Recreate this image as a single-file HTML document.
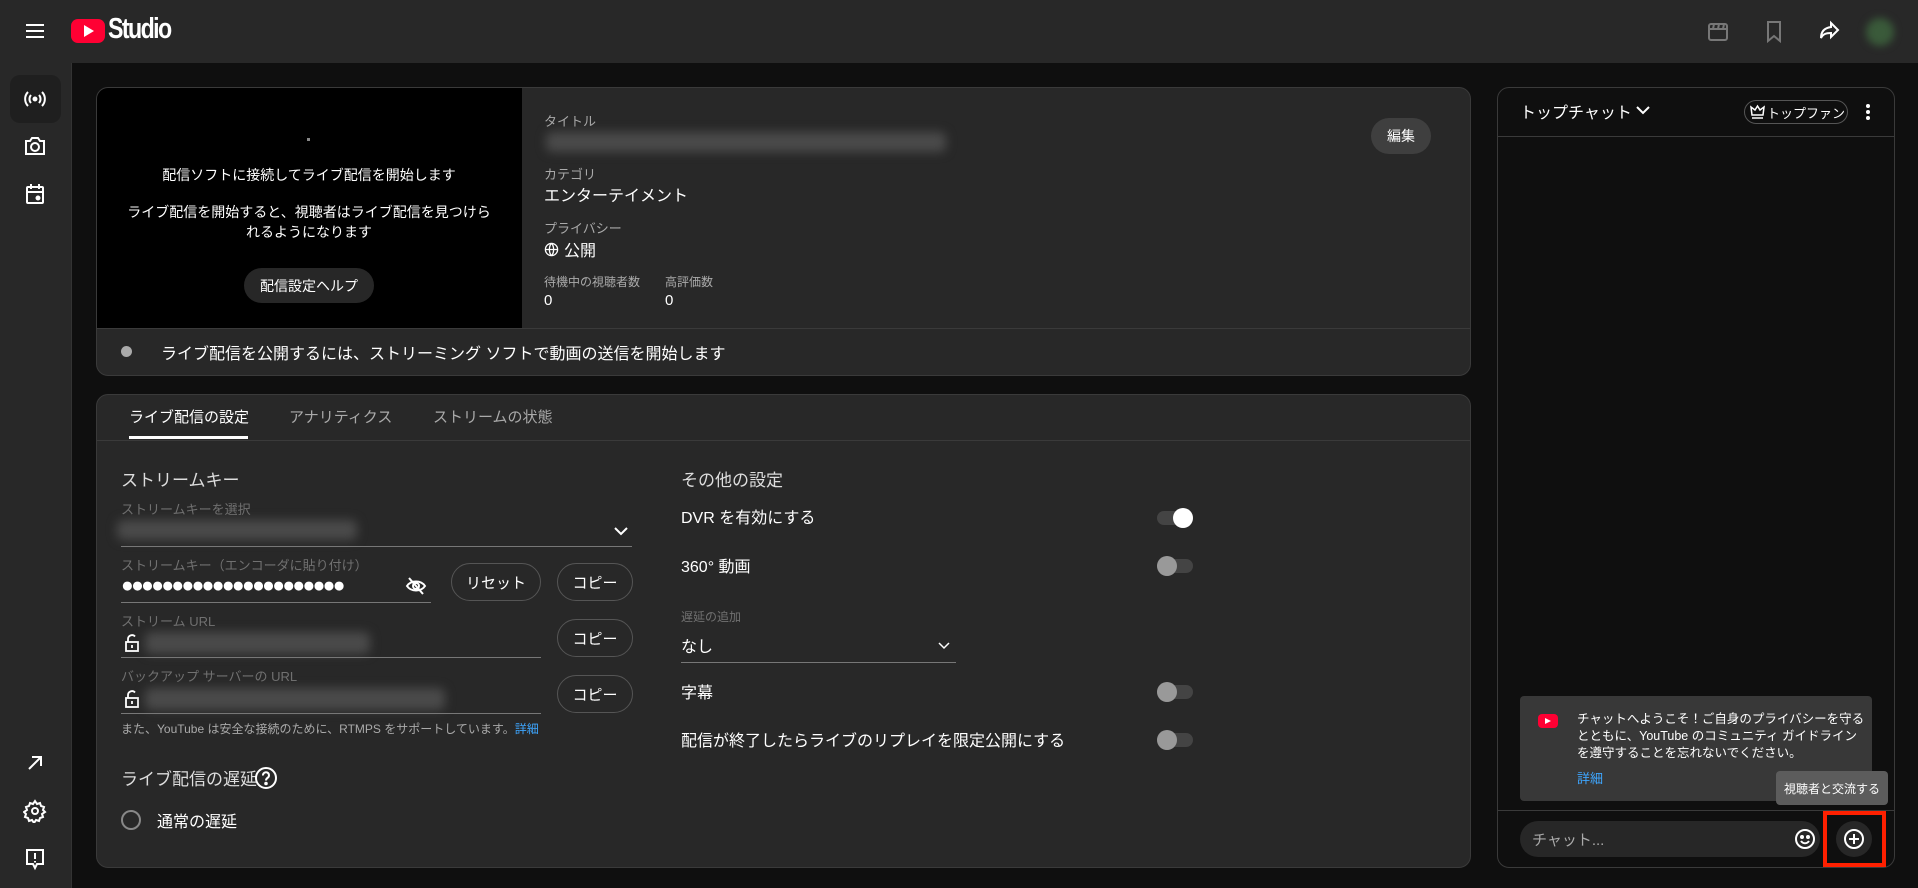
<!DOCTYPE html>
<html><head><meta charset="utf-8"><style>
*{box-sizing:border-box;margin:0;padding:0}
body{width:1918px;height:888px;overflow:hidden;background:#0f0f0f;font-family:"Liberation Sans","Noto Sans CJK JP",sans-serif;color:#fff;position:relative}
.a{position:absolute;white-space:nowrap}
.lbl{font-size:13px;color:#aaa}
.lbl2{font-size:13px;color:#717171}
.btn{position:absolute;border:1px solid #555;border-radius:20px;font-size:15px;display:flex;align-items:center;justify-content:center;color:#fff}
.line{position:absolute;height:1px;background:#777}
.blur{position:absolute;background:#4a4a4a;filter:blur(5px);border-radius:6px}
.tg{position:absolute;width:36px;height:14px;border-radius:7px;background:#444}
.tg i{position:absolute;top:-3px;width:20px;height:20px;border-radius:50%;background:#999}
svg{position:absolute}
</style></head><body>
<!-- top bar -->
<div class="a" style="left:0;top:0;width:1918px;height:63px;background:#282828"></div>
<svg style="left:23px;top:19px" width="24" height="24" viewBox="0 0 24 24"><path d="M3 6h18M3 12h18M3 18h18" stroke="#fff" stroke-width="2"/></svg>
<div class="a" style="left:71px;top:19px;width:34px;height:24px;background:#ff0033;border-radius:7px"></div>
<svg style="left:83px;top:25px" width="12" height="12" viewBox="0 0 12 12"><path d="M1 0L11 6L1 12Z" fill="#fff"/></svg>
<div class="a" style="left:108px;top:13px;font-size:29px;font-weight:bold;letter-spacing:-2px;transform:scaleX(0.8);transform-origin:left">Studio</div>
<svg style="left:1706px;top:20px" width="24" height="24" viewBox="0 0 24 24" fill="none" stroke="#777" stroke-width="2"><rect x="3" y="4" width="18" height="16" rx="2"/><path d="M3 9h18M8 4l-1 5M13 4l-1 5M18 4l-1 5"/></svg>
<svg style="left:1762px;top:19px" width="24" height="24" viewBox="0 0 24 24" fill="none" stroke="#777" stroke-width="2"><path d="M6 3h12v19l-6-5-6 5z"/></svg>
<svg style="left:1817px;top:19px" width="24" height="24" viewBox="0 0 24 24" fill="none" stroke="#fff" stroke-width="2"><path d="M14 4l7 7-7 7v-4c-5 0-8 1-10 5 0-6 3-10 10-11z"/></svg>
<div class="a" style="left:1866px;top:18px;width:28px;height:28px;border-radius:50%;background:#3a5a3a;filter:blur(4px)"></div>
<!-- sidebar -->
<div class="a" style="left:0;top:63px;width:72px;height:825px;background:#282828;border-right:1px solid #333"></div>
<div class="a" style="left:10px;top:75px;width:51px;height:48px;background:#1f1f1f;border-radius:10px"></div>
<svg style="left:23px;top:87px" width="24" height="24" viewBox="0 0 24 24" fill="none" stroke="#fff" stroke-width="2"><circle cx="12" cy="12" r="1.5" fill="#fff"/><path d="M8 8a6 6 0 000 8M16 8a6 6 0 010 8M5 5a10 10 0 000 14M19 5a10 10 0 010 14"/></svg>
<svg style="left:23px;top:134px" width="24" height="24" viewBox="0 0 24 24" fill="none" stroke="#fff" stroke-width="2"><path d="M3 7h4l2-3h6l2 3h4v13H3z"/><circle cx="12" cy="13" r="4"/></svg>
<svg style="left:23px;top:182px" width="24" height="24" viewBox="0 0 24 24" fill="none" stroke="#fff" stroke-width="2"><rect x="4" y="5" width="16" height="16" rx="1"/><path d="M4 10h16M8 2v5M16 2v5"/><circle cx="15" cy="16" r="1.5" fill="#fff"/></svg>
<svg style="left:23px;top:751px" width="24" height="24" viewBox="0 0 24 24" fill="none" stroke="#fff" stroke-width="2"><path d="M6 18L18 6M9 6h9v9"/></svg>
<svg style="left:23px;top:799px" width="24" height="24" viewBox="0 0 24 24" fill="none" stroke="#fff" stroke-width="2"><circle cx="12" cy="12" r="3"/><path d="M12 2l2 3 3-1 1 3 3 1-1 3 2 2-3 2 1 3-3 1-1 3-3-1-2 3-2-3-3 1-1-3-3-1 1-3-2-2 3-2-1-3 3-1 1-3 3 1z"/></svg>
<svg style="left:23px;top:847px" width="24" height="24" viewBox="0 0 24 24" fill="none" stroke="#fff" stroke-width="2"><path d="M4 3h16v14h-6l-2 4-2-4H4z"/><path d="M12 6v6M12 14v1.5"/></svg>
<!-- card 1 -->
<div class="a" style="left:96px;top:87px;width:1375px;height:289px;background:#282828;border:1px solid #3a3a3a;border-radius:12px;overflow:hidden">
 <div class="a" style="left:0;top:0;width:425px;height:240px;background:#000"></div>
 <div class="a" style="left:0;top:240px;width:1375px;height:1px;background:#3a3a3a"></div>
</div>
<div class="a" style="left:307px;top:138px;width:3px;height:3px;background:#888"></div>
<div class="a" style="left:97px;top:165px;width:424px;text-align:center;font-size:14px">配信ソフトに接続してライブ配信を開始します</div>
<div class="a" style="left:97px;top:202px;width:424px;text-align:center;font-size:14px;line-height:20px;white-space:normal;padding:0 27px">ライブ配信を開始すると、視聴者はライブ配信を見つけられるようになります</div>
<div class="a" style="left:244px;top:268px;width:130px;height:35px;background:#272727;border-radius:18px;font-size:14px;display:flex;align-items:center;justify-content:center">配信設定ヘルプ</div>
<div class="a lbl" style="left:544px;top:111px">タイトル</div>
<div class="blur" style="left:546px;top:132px;width:400px;height:20px"></div>
<div class="a lbl" style="left:544px;top:164px">カテゴリ</div>
<div class="a" style="left:544px;top:182px;font-size:16px">エンターテイメント</div>
<div class="a lbl" style="left:544px;top:218px">プライバシー</div>
<svg style="left:544px;top:242px" width="15" height="15" viewBox="0 0 16 16" fill="none" stroke="#fff" stroke-width="1.4"><circle cx="8" cy="8" r="6.5"/><path d="M1.5 8h13M8 1.5c-3 3-3 10 0 13M8 1.5c3 3 3 10 0 13"/></svg>
<div class="a" style="left:564px;top:237px;font-size:16px">公開</div>
<div class="a lbl" style="left:544px;top:273px;font-size:12px">待機中の視聴者数</div>
<div class="a" style="left:544px;top:292px;font-size:15px">0</div>
<div class="a lbl" style="left:665px;top:273px;font-size:12px">高評価数</div>
<div class="a" style="left:665px;top:292px;font-size:15px">0</div>
<div class="a" style="left:1371px;top:118px;width:60px;height:36px;background:#3f3f3f;border-radius:18px;font-size:14px;display:flex;align-items:center;justify-content:center">編集</div>
<div class="a" style="left:121px;top:346px;width:11px;height:11px;border-radius:50%;background:#aaa"></div>
<div class="a" style="left:161px;top:340px;font-size:16px">ライブ配信を公開するには、ストリーミング ソフトで動画の送信を開始します</div>
<!-- card 2 -->
<div class="a" style="left:96px;top:394px;width:1375px;height:474px;background:#282828;border:1px solid #3a3a3a;border-radius:12px"></div>
<div class="a" style="left:97px;top:440px;width:1373px;height:1px;background:#3a3a3a"></div>
<div class="a" style="left:129px;top:406px;font-size:15px">ライブ配信の設定</div>
<div class="a" style="left:129px;top:436px;width:119px;height:3px;background:#fff"></div>
<div class="a" style="left:289px;top:406px;font-size:15px;color:#aaa">アナリティクス</div>
<div class="a" style="left:433px;top:406px;font-size:15px;color:#aaa">ストリームの状態</div>
<div class="a" style="left:121px;top:466px;font-size:17px;color:#ddd">ストリームキー</div>
<div class="a lbl2" style="left:121px;top:499px">ストリームキーを選択</div>
<div class="blur" style="left:117px;top:520px;width:240px;height:20px"></div>
<svg style="left:612px;top:524px" width="18" height="14" viewBox="0 0 18 14" fill="none" stroke="#fff" stroke-width="2"><path d="M3 4l6 6 6-6"/></svg>
<div class="line" style="left:121px;top:546px;width:511px"></div>
<div class="a lbl2" style="left:121px;top:555px">ストリームキー（エンコーダに貼り付け）</div>
<div class="a" style="left:121px;top:573px;font-size:21px;letter-spacing:-2.6px;width:280px;overflow:hidden;line-height:26px">●●●●●●●●●●●●●●●●●●●●●●</div>
<svg style="left:405px;top:576px" width="22" height="20" viewBox="0 0 22 20" fill="none" stroke="#fff" stroke-width="2"><path d="M2 10c4-6 14-6 18 0-4 6-14 6-18 0z"/><circle cx="11" cy="10" r="3"/><path d="M4 2l14 16"/></svg>
<div class="line" style="left:121px;top:602px;width:310px"></div>
<div class="btn" style="left:451px;top:563px;width:90px;height:38px">リセット</div>
<div class="btn" style="left:557px;top:563px;width:76px;height:38px">コピー</div>
<div class="a lbl2" style="left:121px;top:611px">ストリーム URL</div>
<svg style="left:124px;top:634px" width="16" height="18" viewBox="0 0 16 18" fill="none" stroke="#fff" stroke-width="1.8"><rect x="2" y="8" width="12" height="9"/><path d="M4 8V5a4 4 0 017-2.5"/><path d="M8 11v3"/></svg>
<div class="blur" style="left:145px;top:632px;width:225px;height:22px"></div>
<div class="line" style="left:121px;top:657px;width:420px"></div>
<div class="btn" style="left:557px;top:619px;width:76px;height:38px">コピー</div>
<div class="a lbl2" style="left:121px;top:666px">バックアップ サーバーの URL</div>
<svg style="left:124px;top:690px" width="16" height="18" viewBox="0 0 16 18" fill="none" stroke="#fff" stroke-width="1.8"><rect x="2" y="8" width="12" height="9"/><path d="M4 8V5a4 4 0 017-2.5"/><path d="M8 11v3"/></svg>
<div class="blur" style="left:145px;top:688px;width:300px;height:22px"></div>
<div class="line" style="left:121px;top:713px;width:420px"></div>
<div class="btn" style="left:557px;top:675px;width:76px;height:38px">コピー</div>
<div class="a" style="left:121px;top:720px;font-size:12px;color:#aaa">また、YouTube は安全な接続のために、RTMPS をサポートしています。<span style="color:#3ea6ff">詳細</span></div>
<div class="a" style="left:121px;top:765px;font-size:17px;color:#ddd">ライブ配信の遅延</div>
<svg style="left:254px;top:766px" width="24" height="24" viewBox="0 0 24 24" fill="none" stroke="#fff" stroke-width="2"><circle cx="12" cy="12" r="10"/><path d="M9 9.5a3 3 0 115 2c-1.5 1-2 1.5-2 3"/><circle cx="12" cy="17.5" r="0.8" fill="#fff"/></svg>
<div class="a" style="left:121px;top:810px;width:20px;height:20px;border-radius:50%;border:2px solid #888"></div>
<div class="a" style="left:157px;top:808px;font-size:16px">通常の遅延</div>
<!-- right column of settings -->
<div class="a" style="left:681px;top:466px;font-size:17px;color:#ddd">その他の設定</div>
<div class="a" style="left:681px;top:504px;font-size:16px">DVR を有効にする</div>
<div class="tg" style="left:1157px;top:511px"><i style="left:16px;background:#fff"></i></div>
<div class="a" style="left:681px;top:553px;font-size:16px">360° 動画</div>
<div class="tg" style="left:1157px;top:559px"><i style="left:0"></i></div>
<div class="a lbl2" style="left:681px;top:608px;font-size:12px">遅延の追加</div>
<div class="a" style="left:681px;top:633px;font-size:16px">なし</div>
<svg style="left:936px;top:640px" width="16" height="12" viewBox="0 0 16 12" fill="none" stroke="#fff" stroke-width="1.5"><path d="M3 3l5 5 5-5"/></svg>
<div class="line" style="left:681px;top:662px;width:275px"></div>
<div class="a" style="left:681px;top:679px;font-size:16px">字幕</div>
<div class="tg" style="left:1157px;top:685px"><i style="left:0"></i></div>
<div class="a" style="left:681px;top:727px;font-size:16px">配信が終了したらライブのリプレイを限定公開にする</div>
<div class="tg" style="left:1157px;top:733px"><i style="left:0"></i></div>
<!-- chat panel -->
<div class="a" style="left:1497px;top:87px;width:398px;height:781px;background:#0f0f0f;border:1px solid #3a3a3a;border-radius:12px"></div>
<div class="a" style="left:1498px;top:136px;width:396px;height:1px;background:#3a3a3a"></div>
<div class="a" style="left:1520px;top:99px;font-size:16px">トップチャット</div>
<svg style="left:1635px;top:104px" width="16" height="14" viewBox="0 0 16 14" fill="none" stroke="#fff" stroke-width="2"><path d="M2 3l6 6 6-6"/></svg>
<div class="a" style="left:1744px;top:100px;width:104px;height:24px;border:1px solid #555;border-radius:12px"></div>
<svg style="left:1750px;top:104px" width="15" height="16" viewBox="0 0 15 16" fill="none" stroke="#fff" stroke-width="1.5"><path d="M2 11L1 3l4 3 2.5-4 2.5 4 4-3-1 8z"/><path d="M2 14h11"/></svg>
<div class="a" style="left:1767px;top:103px;font-size:13px">トップファン</div>
<div class="a" style="left:1866px;top:104px;width:4px;height:4px;border-radius:50%;background:#fff;box-shadow:0 6px 0 #fff,0 12px 0 #fff"></div>
<div class="a" style="left:1520px;top:696px;width:352px;height:105px;background:#383838;border-radius:4px"></div>
<div class="a" style="left:1538px;top:714px;width:20px;height:14px;background:#ff0033;border-radius:4px"></div>
<svg style="left:1545px;top:718px" width="6" height="6" viewBox="0 0 6 6"><path d="M0 0L6 3L0 6Z" fill="#fff"/></svg>
<div class="a" style="left:1577px;top:711px;font-size:12.5px;line-height:17px;white-space:normal;width:292px">チャットへようこそ！ご自身のプライバシーを守るとともに、YouTube のコミュニティ ガイドラインを遵守することを忘れないでください。</div>
<div class="a" style="left:1577px;top:768px;font-size:13px;color:#3ea6ff">詳細</div>
<div class="a" style="left:1776px;top:771px;width:112px;height:34px;background:#5c5c5c;border-radius:4px;font-size:12px;display:flex;align-items:center;justify-content:center">視聴者と交流する</div>
<div class="a" style="left:1498px;top:810px;width:396px;height:1px;background:#3a3a3a"></div>
<div class="a" style="left:1520px;top:821px;width:300px;height:36px;background:#272727;border-radius:18px"></div>
<div class="a" style="left:1532px;top:829px;font-size:15px;color:#aaa">チャット...</div>
<svg style="left:1794px;top:828px" width="22" height="22" viewBox="0 0 22 22" fill="none" stroke="#fff" stroke-width="2"><circle cx="11" cy="11" r="9"/><circle cx="8" cy="9" r="1" fill="#fff"/><circle cx="14" cy="9" r="1" fill="#fff"/><path d="M7 13c2 3 6 3 8 0"/></svg>
<div class="a" style="left:1836px;top:821px;width:36px;height:36px;border-radius:50%;background:#272727"></div>
<svg style="left:1843px;top:828px" width="22" height="22" viewBox="0 0 22 22" fill="none" stroke="#fff" stroke-width="2"><circle cx="11" cy="11" r="9"/><path d="M11 6v10M6 11h10"/></svg>
<div class="a" style="left:1823px;top:811px;width:63px;height:56px;border:4px solid #ff2000"></div>
</body></html>
